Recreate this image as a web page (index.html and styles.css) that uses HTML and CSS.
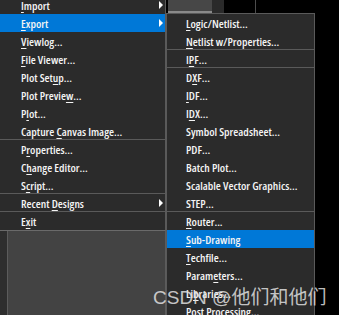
FILE: index.html
```html
<html>
<head>
    <title>File menu - Export</title>
    <link rel="stylesheet" href="styles.css">
</head>
<body>
    <div class="screen">
        <div class="left">
            <ul class="menu main">
                <li class="item"><span><u>I</u>mport</span><i class="arrow"></i></li>
                <li class="item active"><span><u>E</u>xport</span><i class="arrow"></i></li>
                <li class="item"><span><u>V</u>iewlog...</span></li>
                <li class="item"><span><u>F</u>ile Viewer...</span></li>
                <li class="item"><span>Plot Set<u>u</u>p...</span></li>
                <li class="item"><span>Plot Previe<u>w</u>...</span></li>
                <li class="item"><span>P<u>l</u>ot...</span></li>
                <li class="item"><span>Capture <u>C</u>anvas Image...</span></li>
                <li class="sep"></li>
                <li class="item"><span>P<u>r</u>operties...</span></li>
                <li class="item"><span>C<u>h</u>ange Editor...</span></li>
                <li class="item"><span>S<u>c</u>ript...</span></li>
                <li class="sep"></li>
                <li class="item"><span>Recent <u>D</u>esigns</span><i class="arrow"></i></li>
                <li class="sep"></li>
                <li class="item"><span>E<u>x</u>it</span></li>
            </ul>
            <div class="workspace">
                <div class="gutter"></div>
                <div class="panel"></div>
            </div>
        </div>
        <div class="right">
            <div class="topbar">
                <div class="tab"></div>
                <div class="tabgap"></div>
                <div class="blank"></div>
            </div>
            <ul class="menu sub">
                <li class="item"><span><u>L</u>ogic/Netlist...</span></li>
                <li class="item"><span><u>N</u>etlist w/Properties...</span></li>
                <li class="sep"></li>
                <li class="item"><span>I<u>P</u>F...</span></li>
                <li class="sep"></li>
                <li class="item"><span>D<u>X</u>F...</span></li>
                <li class="item"><span><u>I</u>DF...</span></li>
                <li class="item"><span>I<u>D</u>X...</span></li>
                <li class="item"><span>Symbol Spreadsheet...</span></li>
                <li class="item"><span>PDF...</span></li>
                <li class="item"><span>Batch Plot...</span></li>
                <li class="item"><span>Scalable Vector Graphics...</span></li>
                <li class="item"><span>STEP...</span></li>
                <li class="sep"></li>
                <li class="item"><span><u>R</u>outer...</span></li>
                <li class="item active"><span><u>S</u>ub-Drawing</span></li>
                <li class="item"><span><u>T</u>echfile...</span></li>
                <li class="item"><span>Param<u>e</u>ters...</span></li>
                <li class="item"><span>Li<u>b</u>raries...</span></li>
                <li class="item"><span>Post Processing...</span></li>
            </ul>
        </div>
        <div class="watermark">CSDN @他们和他们</div>
    </div>
</body>
</html>
```

FILE: styles.css
```css
body {
    margin: 0;
    background-color: #000;
}
.screen {
    position: relative;
    display: flex;
    width: 339px;
    height: 315px;
    overflow: hidden;
    font-family: "Liberation Sans Narrow", "Open Sans", sans-serif;
    font-stretch: 75%;
    font-weight: 600;
    font-size: 11.5px;
    color: #f4f4f4;
}
.left {
    width: 166px;
    display: flex;
    flex-direction: column;
}
.right {
    flex: 1;
    display: flex;
    flex-direction: column;
}
.menu {
    list-style: none;
    margin: 0;
    padding: 0;
    background-color: #2b2b2b;
}
.menu u {
    text-decoration-thickness: 1px;
    text-underline-offset: 2px;
}
.main {
    border-right: 1px solid #5a5a5a;
    border-bottom: 1px solid #6a6a6a;
    margin-top: -4px;
}
.item {
    height: 18px;
    display: flex;
    align-items: center;
    justify-content: space-between;
    padding-left: 21px;
    padding-right: 2px;
    white-space: nowrap;
}
.item.active {
    background-color: #0078d7;
}
.sep {
    height: 1px;
    margin-top: -1px;
    position: relative;
    background-color: #5a5a5a;
}
.arrow {
    width: 0;
    height: 0;
    border-top: 4px solid transparent;
    border-bottom: 4px solid transparent;
    border-left: 4px solid #fff;
}
.workspace {
    flex: 1;
    display: flex;
}
.gutter {
    width: 7px;
    background-color: #2e2e2e;
    border-right: 1px solid #5c5c5c;
}
.panel {
    flex: 1;
    background-color: #434343;
    border-right: 1px solid #5c5c5c;
}
.topbar {
    height: 14px;
    display: flex;
    background-color: #000;
}
.tab {
    width: 44px;
    height: 11px;
    margin-left: 2px;
    background-color: #474747;
    border-bottom: 2px solid #8a8a8a;
}
.tabgap {
    width: 12px;
    background-color: #2a2a2a;
}
.blank {
    width: 31px;
    border-right: 1px solid #4d4d4d;
}
.sub {
    width: 147px;
    border: 1px solid #5a5a5a;
    border-bottom: none;
}
.sub .item {
    padding-left: 19px;
}
.watermark {
    position: absolute;
    left: 153px;
    top: 282px;
    font-family: "Liberation Sans", "Noto Sans CJK SC", sans-serif;
    font-stretch: normal;
    font-weight: normal;
    font-size: 19px;
    color: rgba(225, 225, 225, 0.85);
    white-space: nowrap;
}
```
